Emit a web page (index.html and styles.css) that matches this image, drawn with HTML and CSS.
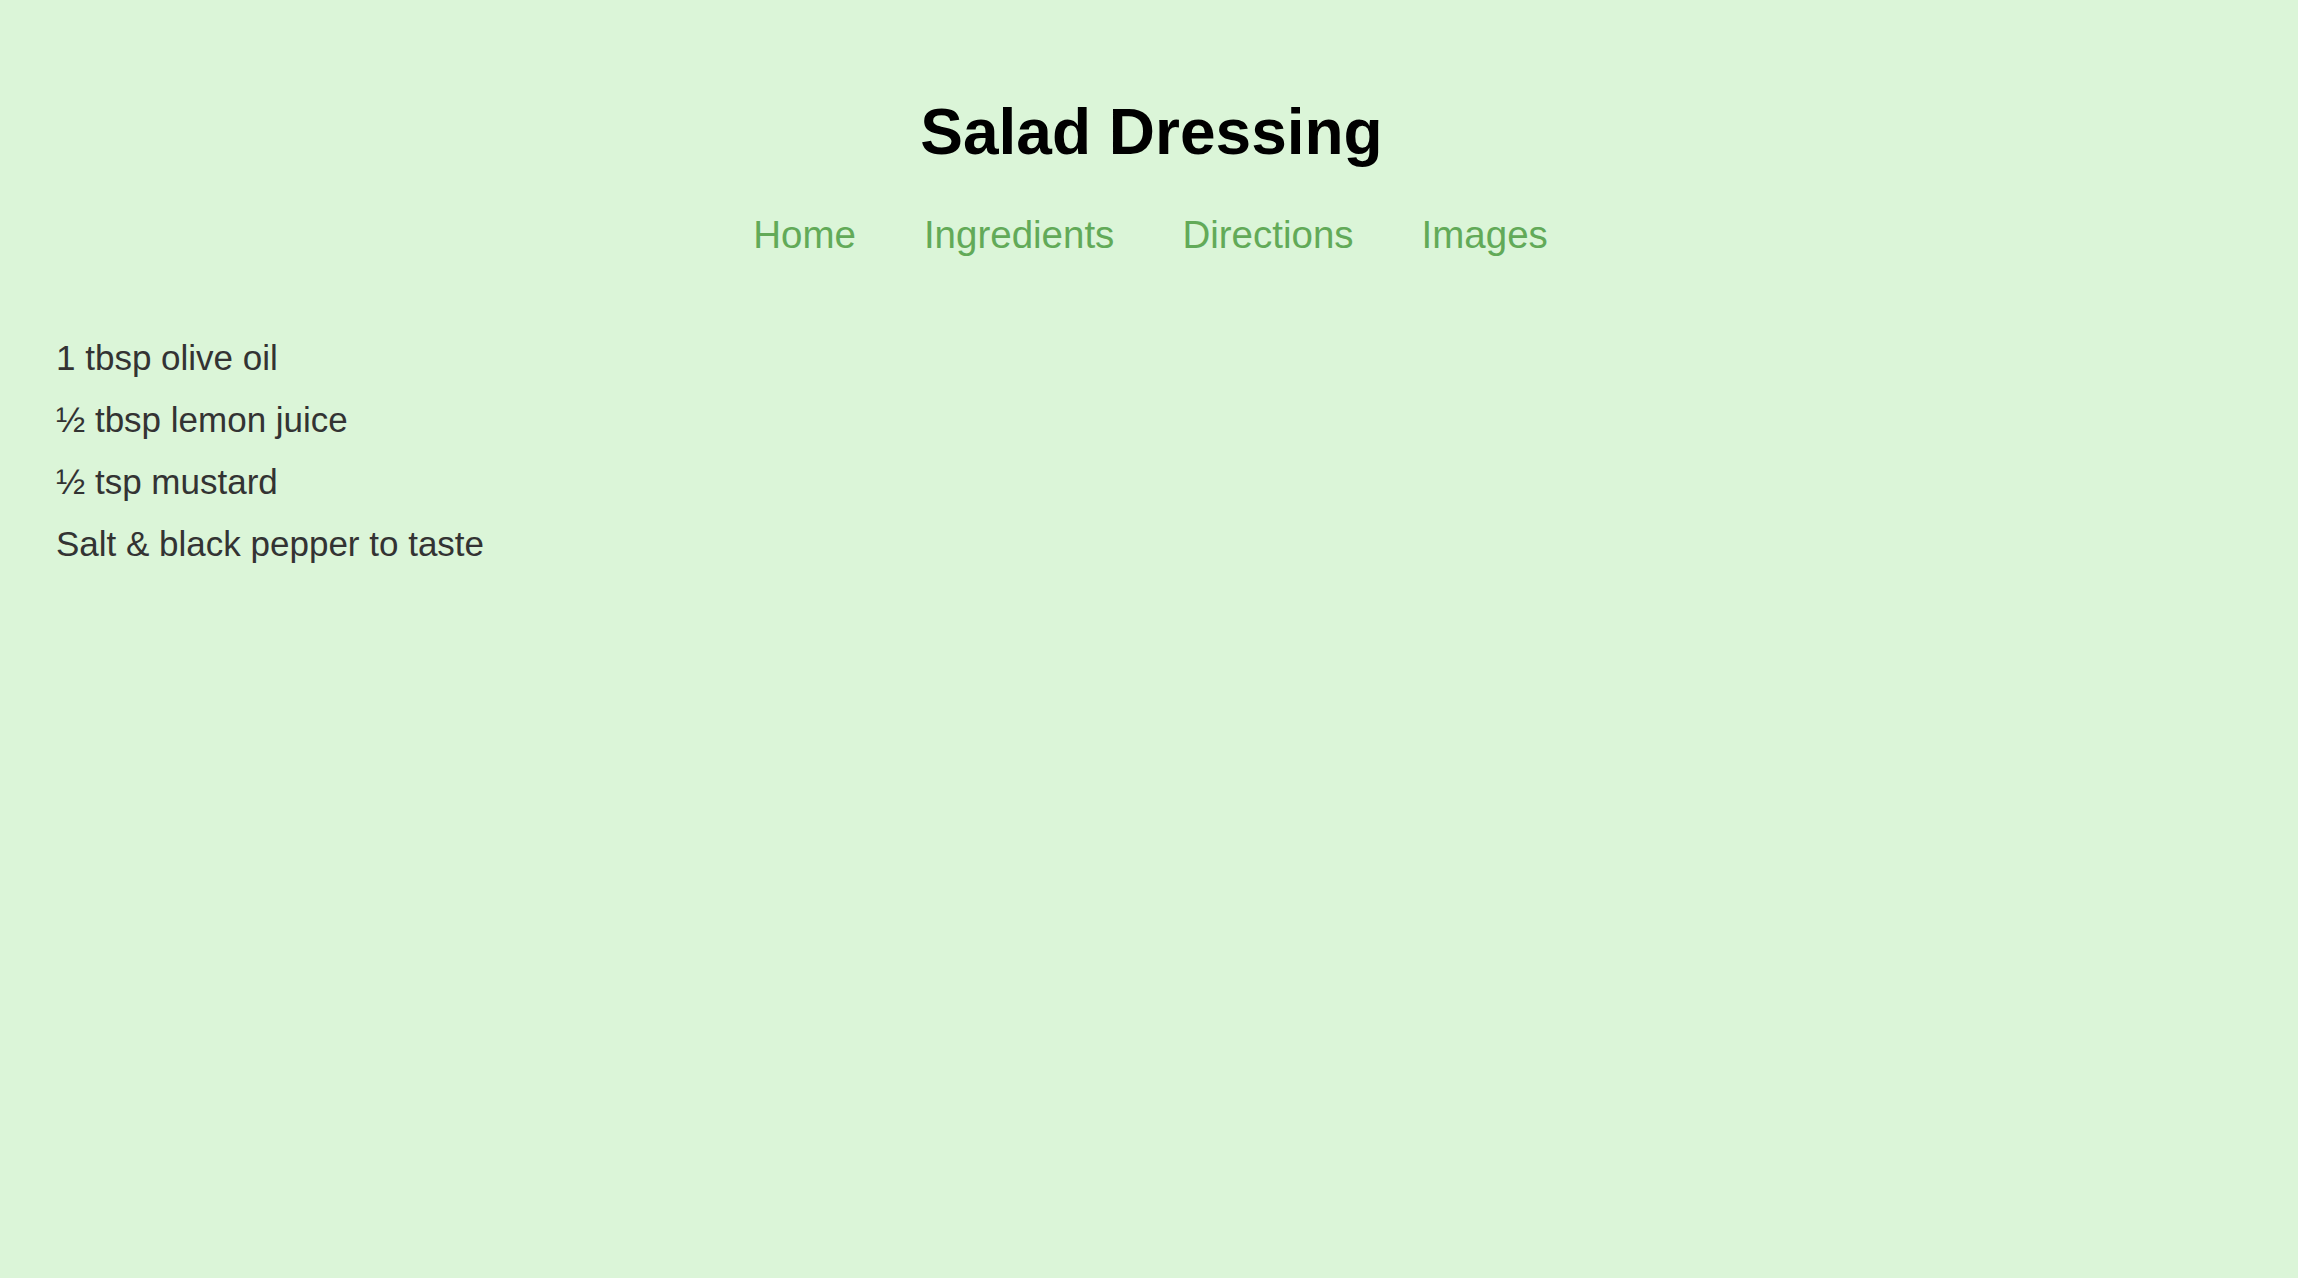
FILE: index.html
```html
<!DOCTYPE html>
<html lang="en">
<head>
<meta charset="utf-8">
<title>Salad Dressing</title>
<link rel="stylesheet" href="styles.css">
</head>
<body>
<header class="site-header">
  <h1 class="title">Salad Dressing</h1>
  <nav class="nav">
    <a class="nav-link" href="#">Home</a>
    <a class="nav-link" href="#">Ingredients</a>
    <a class="nav-link" href="#">Directions</a>
    <a class="nav-link" href="#">Images</a>
  </nav>
</header>
<main class="content">
  <ul class="ingredients">
    <li>1 tbsp olive oil</li>
    <li>½ tbsp lemon juice</li>
    <li>½ tsp mustard</li>
    <li>Salt &amp; black pepper to taste</li>
  </ul>
</main>
</body>
</html>
```
FILE: styles.css
```css
html, body {
  margin: 0;
  padding: 0;
}
body {
  background: #dbf5d8;
  font-family: "Liberation Sans", Arial, Helvetica, sans-serif;
  color: #333333;
  min-height: 100vh;
}
.site-header {
  padding-top: 96px;
  display: flex;
  flex-direction: column;
  align-items: center;
}
.title {
  margin: 0;
  padding-left: 5px;
  font-size: 64px;
  line-height: 73.6px;
  font-weight: bold;
  color: #000000;
}
.nav {
  margin-top: 42px;
  padding-left: 3px;
  display: flex;
  justify-content: center;
  gap: 68px;
}
.nav-link {
  font-size: 38.5px;
  line-height: 45px;
  color: #62aa58;
  text-decoration: none;
}
.content {
  padding: 70px 0 0 56px;
}
.ingredients {
  list-style: none;
  margin: 0;
  padding: 0;
  font-size: 35px;
  line-height: 62px;
  color: #333333;
}
```
